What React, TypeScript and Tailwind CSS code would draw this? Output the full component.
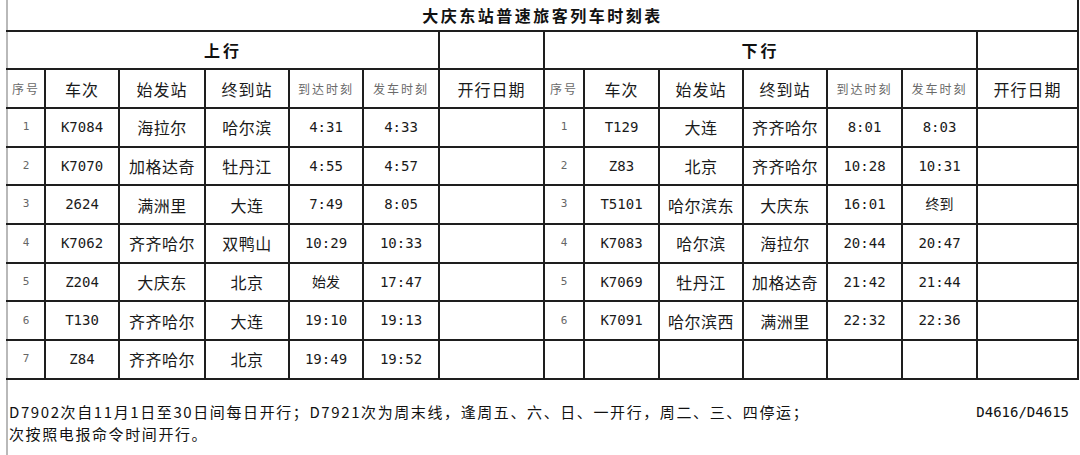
import React from "react";

const cjk = "font-['Noto_Sans_CJK_SC',sans-serif]";
const mono = "font-['DejaVu_Sans_Mono','Noto_Sans_CJK_SC',monospace]";

const upRows = [
  ["1", "K7084", "海拉尔", "哈尔滨", "4:31", "4:33"],
  ["2", "K7070", "加格达奇", "牡丹江", "4:55", "4:57"],
  ["3", "2624", "满洲里", "大连", "7:49", "8:05"],
  ["4", "K7062", "齐齐哈尔", "双鸭山", "10:29", "10:33"],
  ["5", "Z204", "大庆东", "北京", "始发", "17:47"],
  ["6", "T130", "齐齐哈尔", "大连", "19:10", "19:13"],
  ["7", "Z84", "齐齐哈尔", "北京", "19:49", "19:52"],
];

const downRows = [
  ["1", "T129", "大连", "齐齐哈尔", "8:01", "8:03"],
  ["2", "Z83", "北京", "齐齐哈尔", "10:28", "10:31"],
  ["3", "T5101", "哈尔滨东", "大庆东", "16:01", "终到"],
  ["4", "K7083", "哈尔滨", "海拉尔", "20:44", "20:47"],
  ["5", "K7069", "牡丹江", "加格达奇", "21:42", "21:44"],
  ["6", "K7091", "哈尔滨西", "满洲里", "22:32", "22:36"],
  ["", "", "", "", "", ""],
];

// column widths measured from the grid lines, left half then right half
const colWidths = [38, 74, 86, 84, 74, 76, 105, 40, 75, 84, 84, 75, 75, 101];

const cell = "border-2 border-[#1e1e1e] text-center align-middle p-0";
const firstCell = "border-l-[#b9b9b9]";

function HalfRow({ row, first }: { row: string[]; first?: boolean }) {
  const [no, train, from, to, arrive, depart] = row;
  return (
    <>
      <td className={`${cell} ${first ? firstCell : ""} text-[11px] text-[#666] ${mono}`}>{no}</td>
      <td className={`${cell} text-[14px] text-[#1a1a1a] ${mono}`}>{train}</td>
      <td className={`${cell} text-[16px] tracking-[0.5px] text-[#1a1a1a] ${cjk}`}>{from}</td>
      <td className={`${cell} text-[16px] tracking-[0.5px] text-[#1a1a1a] ${cjk}`}>{to}</td>
      <td className={`${cell} text-[14px] text-[#1a1a1a] ${mono}`}>{arrive}</td>
      <td className={`${cell} text-[14px] text-[#1a1a1a] ${mono}`}>{depart}</td>
      <td className={cell}></td>
    </>
  );
}

function HeaderHalf({ first }: { first?: boolean }) {
  const small = `text-[12px] tracking-[2px] text-[#6a6a6a] ${cjk}`;
  const big = `text-[16px] tracking-[1px] text-[#1a1a1a] ${cjk}`;
  return (
    <>
      <td className={`${cell} ${first ? firstCell : ""} ${small}`}>序号</td>
      <td className={`${cell} ${big}`}>车次</td>
      <td className={`${cell} ${big}`}>始发站</td>
      <td className={`${cell} ${big}`}>终到站</td>
      <td className={`${cell} ${small}`}>到达时刻</td>
      <td className={`${cell} ${small}`}>发车时刻</td>
      <td className={`${cell} ${big}`}>开行日期</td>
    </>
  );
}

export default function App() {
  return (
    <div className="w-[1080px] h-[455px] bg-white overflow-hidden">
      <div className="ml-[6px] w-[1073px]">
        <table className="table-fixed border-collapse w-[1073px]">
          <colgroup>
            {colWidths.map((w, i) => (
              <col key={i} style={{ width: w }} />
            ))}
          </colgroup>
          <tbody>
            <tr className="h-[31px]">
              <td
                colSpan={14}
                className={`${cell} ${firstCell} border-t-0 text-[16px] font-bold tracking-[2.5px] text-[#111] ${cjk}`}
              >
                大庆东站普速旅客列车时刻表
              </td>
            </tr>
            <tr className="h-[38px]">
              <td colSpan={6} className={`${cell} ${firstCell} text-[16px] font-bold tracking-[3px] text-[#111] ${cjk}`}>
                上行
              </td>
              <td className={cell}></td>
              <td colSpan={6} className={`${cell} text-[16px] font-bold tracking-[3px] text-[#111] ${cjk}`}>
                下行
              </td>
              <td className={cell}></td>
            </tr>
            <tr className="h-[39px]">
              <HeaderHalf first />
              <HeaderHalf />
            </tr>
            {upRows.map((r, i) => (
              <tr key={i} className="h-[38.7px]">
                <HalfRow row={r} first />
                <HalfRow row={downRows[i]} />
              </tr>
            ))}
          </tbody>
        </table>
        <div className="h-[80px] border-l-2 border-[#b9b9b9] flex justify-between items-start pt-[21px] pr-[10px]">
          <div className={`pl-[1px] text-[15px] leading-[22px] tracking-[1.6px] text-[#111] ${cjk}`}>
            <div>D7902次自11月1日至30日间每日开行；D7921次为周末线，逢周五、六、日、一开行，周二、三、四停运；</div>
            <div>次按照电报命令时间开行。</div>
          </div>
          <div className={`pt-[3px] text-[14px] leading-[17px] text-[#111] ${mono}`}>D4616/D4615</div>
        </div>
      </div>
    </div>
  );
}
